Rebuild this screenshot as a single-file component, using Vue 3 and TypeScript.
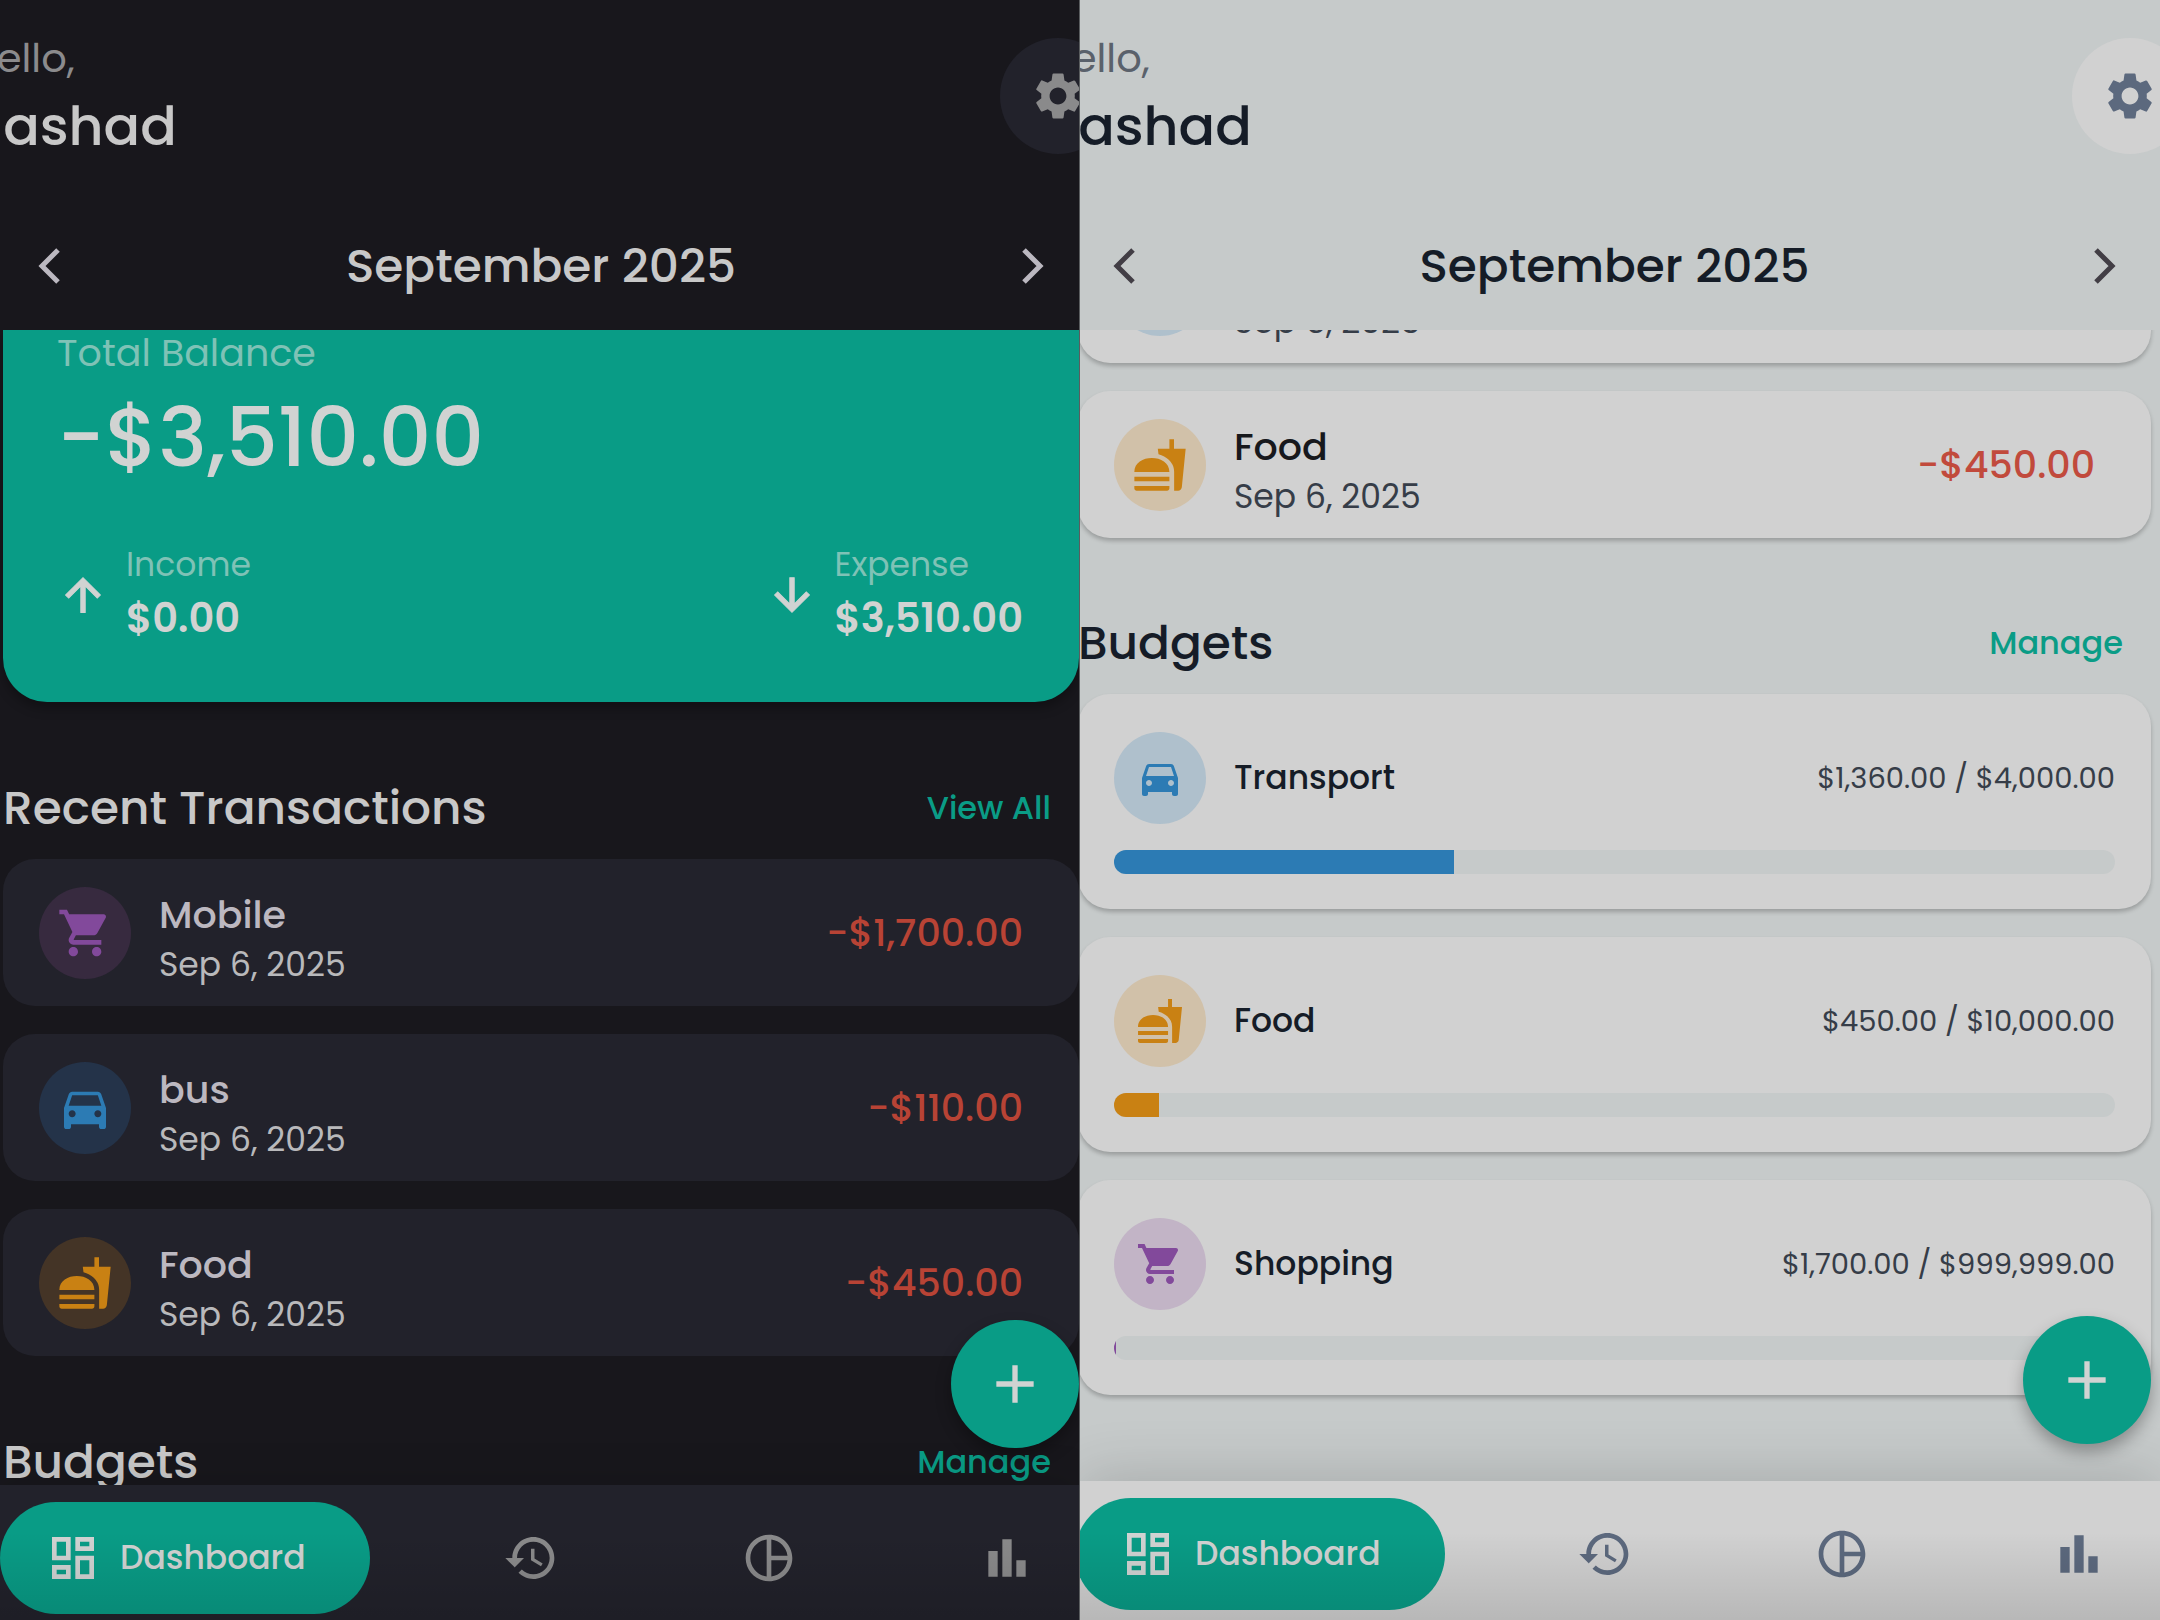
<script setup lang="ts">
type IconName =
  | 'settings' | 'up' | 'down' | 'cart' | 'car' | 'food'
  | 'dashboard' | 'history' | 'pie' | 'bars' | 'plus'

interface Transaction {
  name: string
  date: string
  amount: string
  icon: IconName
  tone: string
}

interface Budget {
  name: string
  amount: string
  percent: number
  icon: IconName
  tone: string
}

interface Panel {
  theme: 'dark' | 'light'
  showBalance: boolean
  transactions: Transaction[]
  budgets: Budget[]
}

const icons: Record<IconName, string> = {
  settings:
    'M19.14 12.94c.04-.3.06-.61.06-.94 0-.32-.02-.64-.07-.94l2.03-1.58c.18-.14.23-.41.12-.61l-1.92-3.32c-.12-.22-.37-.29-.59-.22l-2.39.96c-.5-.38-1.03-.7-1.62-.94l-.36-2.54c-.04-.24-.24-.41-.48-.41h-3.84c-.24 0-.43.17-.47.41l-.36 2.54c-.59.24-1.13.57-1.62.94l-2.39-.96c-.22-.08-.47 0-.59.22L2.74 8.87c-.12.21-.08.47.12.61l2.03 1.58c-.05.3-.09.63-.09.94s.02.64.07.94l-2.03 1.58c-.18.14-.23.41-.12.61l1.92 3.32c.12.22.37.29.59.22l2.39-.96c.5.38 1.03.7 1.62.94l.36 2.54c.05.24.24.41.48.41h3.84c.24 0 .44-.17.47-.41l.36-2.54c.59-.24 1.13-.56 1.62-.94l2.39.96c.22.08.47 0 .59-.22l1.92-3.32c.12-.22.07-.47-.12-.61l-2.01-1.58zM12 15.6c-1.98 0-3.6-1.62-3.6-3.6s1.62-3.6 3.6-3.6 3.6 1.62 3.6 3.6-1.62 3.6-3.6 3.6z',
  up: 'M4 12l1.41 1.41L11 7.83V20h2V7.83l5.58 5.59L20 12l-8-8-8 8z',
  down: 'M20 12l-1.41-1.41L13 16.17V4h-2v12.17l-5.58-5.59L4 12l8 8 8-8z',
  cart:
    'M7 18c-1.1 0-1.99.9-1.99 2S5.9 22 7 22s2-.9 2-2-.9-2-2-2zM1 2v2h2l3.6 7.59-1.35 2.45c-.16.28-.25.61-.25.96 0 1.1.9 2 2 2h12v-2H7.42c-.14 0-.25-.11-.25-.25l.03-.12.9-1.63h7.45c.75 0 1.41-.41 1.75-1.03l3.58-6.49c.08-.14.12-.31.12-.48 0-.55-.45-1-1-1H5.21l-.94-2H1zm16 16c-1.1 0-1.99.9-1.99 2s.89 2 1.99 2 2-.9 2-2-.9-2-2-2z',
  car:
    'M18.92 6.01C18.72 5.42 18.16 5 17.5 5h-11c-.66 0-1.21.42-1.42 1.01L3 12v8c0 .55.45 1 1 1h1c.55 0 1-.45 1-1v-1h12v1c0 .55.45 1 1 1h1c.55 0 1-.45 1-1v-8l-2.08-5.99zM6.5 16c-.83 0-1.5-.67-1.5-1.5S5.67 13 6.5 13s1.5.67 1.5 1.5S7.33 16 6.5 16zm11 0c-.83 0-1.5-.67-1.5-1.5s.67-1.5 1.5-1.5 1.5.67 1.5 1.5-.67 1.5-1.5 1.5zM5 11l1.5-4.5h11L19 11H5z',
  food:
    'M18.06 22.99h1.66c.84 0 1.53-.64 1.63-1.46L23 5.05h-5V1h-1.97v4.05h-4.97l.3 2.34c1.71.47 3.31 1.32 4.27 2.26 1.44 1.42 2.43 2.89 2.43 5.29v8.05zM1 21.99V21h15.03v.99c0 .55-.45 1-1.01 1H2.01c-.56 0-1.01-.45-1.01-1zm15.03-7c0-8-15.03-8-15.03 0h15.03zM1.02 17h15v2h-15z',
  dashboard:
    'M19 5v2h-4V5h4M9 5v6H5V5h4m10 8v6h-4v-6h4M9 17v2H5v-2h4M21 3h-8v6h8V3zM11 3H3v10h8V3zm10 8h-8v10h8V11zm-10 4H3v6h8v-6z',
  history:
    'M13 3c-4.97 0-9 4.03-9 9H1l3.89 3.89.07.14L9 12H6c0-3.87 3.13-7 7-7s7 3.13 7 7-3.13 7-7 7c-1.93 0-3.68-.79-4.94-2.06l-1.42 1.42C8.27 19.99 10.51 21 13 21c4.97 0 9-4.03 9-9s-4.03-9-9-9zm-1 5v5l4.28 2.54.72-1.21-3.5-2.08V8H12z',
  pie:
    'M12 2C6.48 2 2 6.48 2 12s4.48 10 10 10 10-4.48 10-10S17.52 2 12 2zm1 2.07c3.61.45 6.48 3.33 6.93 6.93H13V4.07zM4 12c0-4.06 3.07-7.44 7-7.93v15.87c-3.93-.5-7-3.88-7-7.94zm9 7.93V13h6.93c-.45 3.61-3.32 6.48-6.93 6.93z',
  bars: 'M4 9h4v11H4zm12 4h4v7h-4zm-6-9h4v16h-4z',
  plus: 'M19 13h-6v6h-2v-6H5v-2h6V5h2v6h6v2z',
}

const mobile: Transaction = { name: 'Mobile', date: 'Sep 6, 2025', amount: '-$1,700.00', icon: 'cart', tone: 'purple' }
const bus: Transaction = { name: 'bus', date: 'Sep 6, 2025', amount: '-$110.00', icon: 'car', tone: 'blue' }
const food: Transaction = { name: 'Food', date: 'Sep 6, 2025', amount: '-$450.00', icon: 'food', tone: 'orange' }

const panels: Panel[] = [
  { theme: 'dark', showBalance: true, transactions: [mobile, bus, food], budgets: [] },
  {
    theme: 'light',
    showBalance: false,
    transactions: [bus, food],
    budgets: [
      { name: 'Transport', amount: '$1,360.00 / $4,000.00', percent: 34, icon: 'car', tone: 'blue' },
      { name: 'Food', amount: '$450.00 / $10,000.00', percent: 4.5, icon: 'food', tone: 'orange' },
      { name: 'Shopping', amount: '$1,700.00 / $999,999.00', percent: 0.17, icon: 'cart', tone: 'purple' },
    ],
  },
]

const tabs: { label: string; icon: IconName }[] = [
  { label: 'History', icon: 'history' },
  { label: 'Budgets', icon: 'pie' },
  { label: 'Reports', icon: 'bars' },
]
</script>

<template>
  <div class="screens">
    <section v-for="panel in panels" :key="panel.theme" class="panel" :class="panel.theme">
      <header class="inset">
        <div class="top">
          <div class="greeting">
            <p class="hello">Hello,</p>
            <h1>Rashad</h1>
          </div>
          <button class="settings" type="button" aria-label="Settings">
            <svg class="icon" viewBox="0 0 24 24"><path :d="icons.settings" /></svg>
          </button>
        </div>
        <div class="month">
          <button type="button" aria-label="Previous month">
            <svg class="chevron" viewBox="0 0 22 36"><path d="M20 2 4 18l16 16" /></svg>
          </button>
          <h2>September 2025</h2>
          <button type="button" aria-label="Next month">
            <svg class="chevron" viewBox="0 0 22 36"><path d="m2 2 16 16L2 34" /></svg>
          </button>
        </div>
      </header>

      <main>
        <div class="inset scroll">
          <div v-if="panel.showBalance" class="balance">
            <p class="balance-label">Total Balance</p>
            <p class="balance-value">-$3,510.00</p>
            <div class="stats">
              <div class="stat">
                <svg class="arrow" viewBox="0 0 24 24"><path :d="icons.up" /></svg>
                <div>
                  <p class="stat-label">Income</p>
                  <p class="stat-value">$0.00</p>
                </div>
              </div>
              <div class="stat">
                <svg class="arrow" viewBox="0 0 24 24"><path :d="icons.down" /></svg>
                <div>
                  <p class="stat-label">Expense</p>
                  <p class="stat-value">$3,510.00</p>
                </div>
              </div>
            </div>
          </div>

          <div v-if="panel.showBalance" class="section-head">
            <h3>Recent Transactions</h3>
            <a href="#transactions">View All</a>
          </div>
          <ul class="cards">
            <li v-for="item in panel.transactions" :key="item.name" class="card transaction">
              <span class="badge" :class="item.tone">
                <svg class="icon" viewBox="0 0 24 24"><path :d="icons[item.icon]" /></svg>
              </span>
              <div class="what">
                <p class="name">{{ item.name }}</p>
                <p class="date">{{ item.date }}</p>
              </div>
              <p class="amount">{{ item.amount }}</p>
            </li>
          </ul>

          <div class="section-head">
            <h3>Budgets</h3>
            <a href="#budgets">Manage</a>
          </div>
          <ul class="cards">
            <li v-for="item in panel.budgets" :key="item.name" class="card budget">
              <div class="budget-row">
                <span class="badge" :class="item.tone">
                  <svg class="icon small" viewBox="0 0 24 24"><path :d="icons[item.icon]" /></svg>
                </span>
                <p class="budget-name">{{ item.name }}</p>
                <p class="budget-amount">{{ item.amount }}</p>
              </div>
              <div class="track">
                <div class="fill" :class="item.tone" :style="{ width: item.percent + '%' }"></div>
              </div>
            </li>
          </ul>
        </div>
      </main>

      <nav>
        <button class="fab" type="button" aria-label="Add transaction">
          <svg class="icon" viewBox="0 0 24 24"><path :d="icons.plus" /></svg>
        </button>
        <div class="tabs">
          <button class="tab active" type="button">
            <svg class="icon" viewBox="0 0 24 24"><path :d="icons.dashboard" /></svg>
            <span>Dashboard</span>
          </button>
          <button v-for="tab in tabs" :key="tab.icon" class="tab" type="button" :aria-label="tab.label">
            <svg class="icon" viewBox="0 0 24 24"><path :d="icons[tab.icon]" /></svg>
          </button>
        </div>
      </nav>
    </section>
  </div>
</template>

<style>
body {
  margin: 0;
}
</style>

<style scoped>
.screens {
  display: grid;
  grid-template-columns: 1fr 1fr;
  height: 100vh;
  font-family: Poppins, Inter, "Open Sans", sans-serif;
}

.panel {
  display: flex;
  flex-direction: column;
  min-width: 0;
  overflow: hidden;
  background: var(--bg);
  color: var(--text);
}

.dark {
  --bg: #18171c;
  --card: #22222b;
  --text: #c8c8c8;
  --name: #bcb8c0;
  --date: #b9b9bb;
  --muted: #8b8b8d;
  --chevron: #bbb8c0;
  --gear: #8a8a8b;
  --red: #b84335;
  --purple-bg: #372a3f;
  --blue-bg: #243349;
  --orange-bg: #443426;
  --inset-left: 3px;
  --inset-right: 0px;
  --section-top: 76px;
  --card-shadow: none;
  --nav-shadow: 0 -4px 40px rgba(0, 0, 0, 0.12);
  --nav-bottom: 6px;
  border-right: 1px solid #5a5d5f;
}

.light {
  --bg: #c6caca;
  --card: #d1d1d1;
  --text: #151c27;
  --name: #17181c;
  --date: #363d48;
  --muted: #5a616b;
  --chevron: #423e45;
  --gear: #5c697e;
  --red: #c14a3c;
  --purple-bg: #c2b4c6;
  --blue-bg: #afc0cc;
  --orange-bg: #d1c1a9;
  --inset-left: -2px;
  --inset-right: 9px;
  --section-top: 75px;
  --card-shadow: 0 3px 4px rgba(0, 0, 0, 0.22);
  --nav-shadow: 0 -4px 60px rgba(0, 0, 0, 0.16);
  --nav-bottom: 10px;
}

p, h1, h2, h3, ul {
  margin: 0;
  padding: 0;
}

ul {
  list-style: none;
}

a {
  color: #0a9c86;
  text-decoration: none;
}

button {
  display: flex;
  align-items: center;
  justify-content: center;
  padding: 0;
  border: 0;
  background: none;
  color: inherit;
  font: inherit;
}

.inset {
  margin-left: var(--inset-left);
  margin-right: var(--inset-right);
}

.icon {
  flex: none;
  width: 56px;
  height: 56px;
  fill: currentColor;
}

.icon.small {
  width: 48px;
  height: 48px;
}

.top {
  display: flex;
  justify-content: space-between;
  align-items: flex-start;
  padding-top: 32px;
}

.greeting {
  margin-left: -34px;
}

.hello {
  color: var(--muted);
  font-size: 40px;
  line-height: 52px;
}

h1 {
  font-size: 54px;
  font-weight: 500;
  line-height: 84px;
}

.settings {
  flex: none;
  width: 116px;
  height: 116px;
  margin-top: 6px;
  margin-right: -37px;
  border-radius: 50%;
  background: var(--card);
  color: var(--gear);
}

.month {
  display: flex;
  align-items: center;
  justify-content: space-between;
  padding: 34px 35px 0;
}

h2 {
  font-size: 47px;
  font-weight: 500;
  line-height: 128px;
}

.chevron {
  width: 22px;
  height: 36px;
  fill: none;
  stroke: var(--chevron);
  stroke-width: 5;
}

main {
  flex: 1;
  min-height: 0;
  overflow: hidden;
}

/* The light panel is scrolled part of the way down its list. */
.light .scroll {
  margin-top: -114px;
}

.balance {
  padding: 0 56px 53px 54px;
  border-radius: 0 0 44px 44px;
  background: #099c86;
  box-shadow: 0 6px 12px rgba(0, 0, 0, 0.3);
  color: #d1d3d2;
}

.balance-label {
  color: #7fc2b6;
  font-size: 38px;
  line-height: 46px;
}

.balance-value {
  margin: 12px 0 53px;
  font-size: 82px;
  font-weight: 500;
  line-height: 100px;
}

.stats {
  display: flex;
  justify-content: space-between;
}

.stat {
  display: flex;
  align-items: center;
  gap: 17px;
}

.arrow {
  width: 52px;
  height: 52px;
  fill: currentColor;
  stroke: currentColor;
  stroke-width: 0.5;
}

.stat-label {
  color: #7fc2b6;
  font-size: 33px;
  line-height: 48px;
}

.stat-value {
  font-size: 40px;
  font-weight: 600;
  line-height: 58px;
  padding-bottom: 2px;
}

.section-head {
  display: flex;
  align-items: center;
  justify-content: space-between;
  padding: var(--section-top) 28px 21px 0;
}

h3 {
  font-size: 47px;
  font-weight: 500;
  line-height: 60px;
}

.section-head a {
  font-size: 32px;
  font-weight: 500;
}

.cards {
  display: flex;
  flex-direction: column;
  gap: 28px;
}

.card {
  border-radius: 32px;
  background: var(--card);
  box-shadow: var(--card-shadow);
}

.transaction {
  display: flex;
  align-items: center;
  gap: 28px;
  min-height: 147px;
  padding: 0 56px 0 36px;
}

.badge {
  display: flex;
  flex: none;
  align-items: center;
  justify-content: center;
  width: 92px;
  height: 92px;
  border-radius: 50%;
}

.badge.purple {
  background: var(--purple-bg);
  color: #82499b;
}

.badge.blue {
  background: var(--blue-bg);
  color: #2c7bb4;
}

.badge.orange {
  background: var(--orange-bg);
  color: #c98113;
}

.what {
  flex: 1;
  padding-top: 14px;
}

.name {
  color: var(--name);
  font-size: 38px;
  font-weight: 500;
  line-height: 50px;
}

.date {
  color: var(--date);
  font-size: 33px;
  line-height: 50px;
}

.amount {
  color: var(--red);
  font-size: 38px;
  font-weight: 500;
}

.budget {
  padding: 38px 36px 35px;
}

.budget-row {
  display: flex;
  align-items: center;
  gap: 28px;
}

.budget-name {
  flex: 1;
  font-size: 33px;
  font-weight: 500;
}

.budget-amount {
  color: var(--date);
  font-size: 29px;
}

.track {
  height: 24px;
  margin-top: 26px;
  overflow: hidden;
  border-radius: 12px;
  background: #c6caca;
}

.fill {
  height: 100%;
}

.fill.blue {
  background: #2c7bb4;
}

.fill.orange {
  background: #c98113;
}

.fill.purple {
  background: #82499b;
}

nav {
  position: relative;
  padding: 17px 0 var(--nav-bottom);
  background: var(--card);
  box-shadow: var(--nav-shadow);
}

/* Soft shade along the bottom edge of the screen. */
nav::after {
  position: absolute;
  right: 0;
  bottom: 0;
  left: 0;
  height: 88px;
  background: linear-gradient(transparent, rgba(0, 0, 0, 0.12));
  content: "";
  pointer-events: none;
}

.tabs {
  display: flex;
  justify-content: space-between;
  margin-left: calc(var(--inset-left) - 3px);
  margin-right: calc(var(--inset-right) - 5px);
}

.tab {
  width: 154px;
  height: 112px;
  border-radius: 56px;
  color: var(--gear);
}

.tab.active {
  gap: 19px;
  justify-content: flex-start;
  width: 370px;
  padding-left: 45px;
  background: #099c86;
  color: #d1d3d2;
  font-size: 33px;
  font-weight: 500;
}

.fab {
  position: absolute;
  right: var(--inset-right);
  bottom: calc(100% + 37px);
  width: 128px;
  height: 128px;
  border-radius: 50%;
  background: #099c86;
  box-shadow: 0 8px 16px rgba(0, 0, 0, 0.3);
  color: #d1d3d2;
}

.fab .icon {
  width: 64px;
  height: 64px;
}
</style>
